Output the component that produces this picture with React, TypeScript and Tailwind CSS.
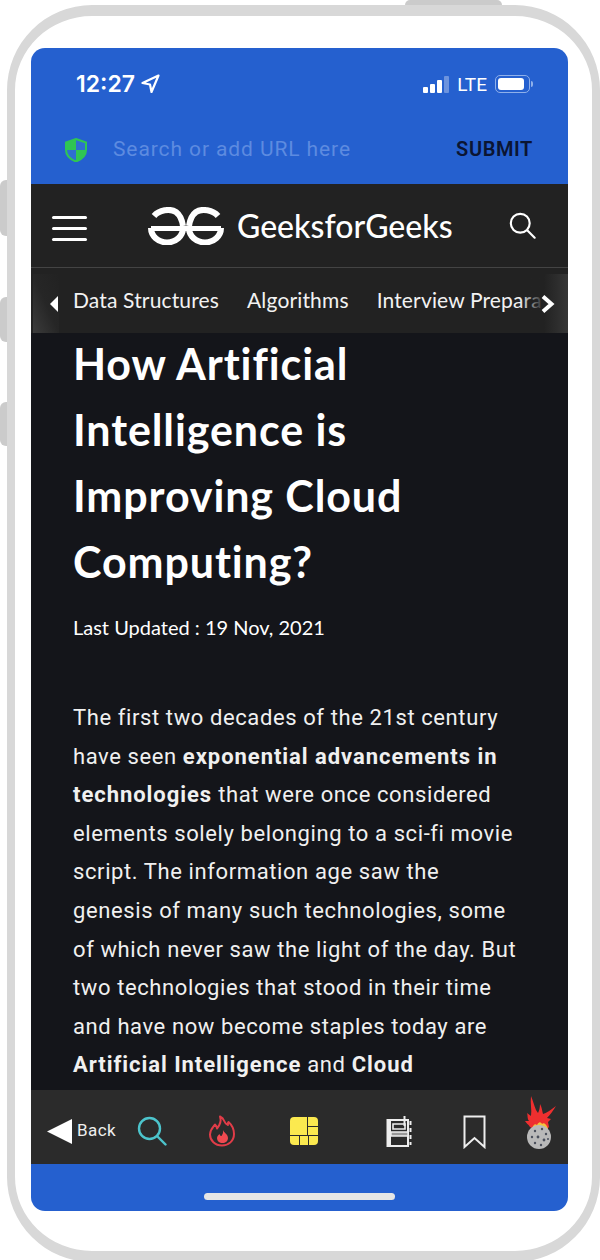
const bodyLines = [
  <>The first two decades of the 21st century</>,
  <>have seen <b className="tracking-[0.95px]">exponential advancements in</b></>,
  <><b className="tracking-[0.95px]">technologies</b> that were once considered</>,
  <>elements solely belonging to a sci-fi movie</>,
  <>script. The information age saw the</>,
  <>genesis of many such technologies, some</>,
  <>of which never saw the light of the day. But</>,
  <>two technologies that stood in their time</>,
  <>and have now become staples today are</>,
  <><b className="tracking-[0.95px]">Artificial Intelligence</b> and <b className="tracking-[0.95px]">Cloud</b></>,
  <><b className="tracking-[0.95px]">Computing.</b> Both have changed the way</>,
];

const ShieldIcon = () => (
  <svg width="22" height="24" viewBox="0 0 22 24">
    <path d="M11 1 L21 4.5 V12 C21 18 16 21.5 11 23.5 C6 21.5 1 18 1 12 V4.5 Z" fill="#2f6fd0" stroke="#2fc653" strokeWidth="2" />
    <path d="M11 1 V12 H1 V4.5 Z M11 12 H21 C21 18 16 21.5 11 23.5 Z" fill="#2fc653" />
  </svg>
);

const LocationIcon = () => (
  <svg width="19" height="20" viewBox="0 0 19 20" fill="none" stroke="white" strokeWidth="2.2" strokeLinejoin="round">
    <path d="M17.5 1.5 L1.5 9 L9 10.5 L10.5 18 Z" />
  </svg>
);

const SignalIcon = () => (
  <div className="flex items-end gap-[2px] h-[17px]">
    <div className="w-[5px] h-[6px] rounded-[1px] bg-white" />
    <div className="w-[5px] h-[9px] rounded-[1px] bg-white" />
    <div className="w-[5px] h-[13px] rounded-[1px] bg-white" />
    <div className="w-[5px] h-[17px] rounded-[1px] bg-[#6c93de]" />
  </div>
);

const BatteryIcon = () => (
  <div className="flex items-center">
    <div className="w-[35px] h-[18px] rounded-[5px] border border-[#8fb0ea] p-[2px]">
      <div className="w-[26px] h-full rounded-[3px] bg-white" />
    </div>
    <div className="ml-[1px] w-[2px] h-[6px] rounded-r-sm bg-[#8fb0ea]" />
  </div>
);

const GfgLogo = () => (
  <svg width="76" height="38" viewBox="0 0 76 38" fill="none" stroke="white" strokeWidth="6">
    <path d="M6 9 C11 3 22 1 28 5 C32 8 34 12 35 19" />
    <path d="M70 9 C65 3 54 1 48 5 C44 8 42 12 41 19" />
    <path d="M3 21.5 H73" strokeWidth="5" />
    <path d="M3 21 A15.5 14 0 0 0 35 21" />
    <path d="M41 21 A15.5 14 0 0 0 73 21" />
  </svg>
);

const SearchGlass = ({ size, color, width }: { size: number; color: string; width: number }) => (
  <svg width={size} height={size} viewBox="0 0 30 30" fill="none" stroke={color} strokeWidth={width} strokeLinecap="round">
    <circle cx="12.5" cy="12.5" r="10.5" />
    <path d="M20.5 20.5 L28.5 28.5" />
  </svg>
);

const FlameIcon = () => (
  <svg width="26" height="32" viewBox="0 0 26 32" fill="none">
    <path d="M11 1.5 C17 4 13.5 8 19 10 C18.5 8.5 19 7.5 19.5 7 C23.5 10.5 25 14.5 25 19 C25 26 19.5 30.5 13 30.5 C6 30.5 1 25.5 1 19.5 C1 14.5 4 12.5 6 9.5 C7.5 11 8 12 8 13.5 C11 10 12.5 6 11 1.5 Z" stroke="#e03c48" strokeWidth="2" strokeLinejoin="round" />
    <path d="M14 15 C15 18 19 19 19 23 C19 26 16.5 28 13.5 28 C10.5 28 8 26 8 23 C8 21 9.5 20 10.5 19 C11 20.5 11.5 21 12.5 21 C13.5 19.5 14.5 17.5 14 15 Z" fill="#f04a50" />
  </svg>
);

const ChipIcon = () => (
  <div className="grid grid-cols-[17px_10px] grid-rows-[18px_9px] w-[28px] h-[28px] gap-[1px]">
    <div className="bg-[#fbe94f] rounded-tl-[4px]" />
    <div className="grid grid-rows-2 gap-[1px]">
      <div className="bg-[#fbe94f] rounded-tr-[4px]" />
      <div className="bg-[#fbe94f]" />
    </div>
    <div className="col-span-2 grid grid-cols-3 gap-[1px]">
      <div className="bg-[#fbe94f] rounded-bl-[4px]" />
      <div className="bg-[#fbe94f]" />
      <div className="bg-[#fbe94f] rounded-br-[4px]" />
    </div>
  </div>
);

const NotebookIcon = () => (
  <svg width="26" height="33" viewBox="0 0 26 33" fill="none" stroke="#eeeeee" strokeWidth="2">
    <path d="M1.5 5 H22 V31 H1.5 Z" />
    <path d="M1.5 5 H5 V31 H1.5 Z" fill="#eeeeee" stroke="none" />
    <path d="M7 9 H19 V14 H7 Z" strokeWidth="1.6" />
    <path d="M5 17 H22 V21 H5 Z" fill="#999999" stroke="#eeeeee" strokeWidth="1.4" />
    <path d="M18.5 1 V11" strokeWidth="2" />
    <path d="M24.5 6 V10 M24.5 13 V17 M24.5 20 V24 M24.5 27 V30" strokeWidth="2" />
  </svg>
);

const BookmarkIcon = () => (
  <svg width="23" height="34" viewBox="0 0 23 34" fill="none" stroke="#eeeeee" strokeWidth="2">
    <path d="M1.5 1.5 H21.5 V32 L11.5 23 L1.5 32 Z" />
  </svg>
);

const BombIcon = () => (
  <svg width="32" height="53" viewBox="0 0 32 53">
    <path d="M5 31 C3 28 1 27 0 25 L4 25 C2 22 3 20 2 17 L6 20 C7 14 5 7 6 0 C8 5 9 9 11 14 L13 17 C14 15 15 12 15 8 C17 11 17 15 18 18 C21 17 26 14 31 10 C28 15 25 19 22 22 L26 23 L23 26 L24 31 L22 33 H8 Z" fill="#ee2f2f" />
    <path d="M7 33 C8 29 10 27 12 29 C14 25 16 26 17 28 C19 26 22 29 23 33 Z" fill="#f2c23c" />
    <circle cx="14" cy="41" r="12" fill="#b9b9b9" />
    <g fill="#4a4f5c">
      <circle cx="10" cy="35" r="1.2" />
      <circle cx="17" cy="33" r="1.2" />
      <circle cx="21" cy="38" r="1.2" />
      <circle cx="7" cy="41" r="1.2" />
      <circle cx="13" cy="41" r="1.4" />
      <circle cx="19" cy="44" r="1.4" />
      <circle cx="10" cy="47" r="1.2" />
      <circle cx="16" cy="49" r="1.2" />
      <circle cx="23" cy="43" r="1" />
    </g>
  </svg>
);

const App = () => {
  return (
    <div className="relative w-[600px] h-[1260px] bg-white overflow-hidden">
      {/* device side buttons */}
      <div className="absolute left-0 top-[180px] w-[7px] h-[56px] rounded-l-md bg-[#cbcbcb]" />
      <div className="absolute left-0 top-[297px] w-[7px] h-[45px] rounded-l-md bg-[#cbcbcb]" />
      <div className="absolute left-0 top-[402px] w-[7px] h-[44px] rounded-l-md bg-[#cbcbcb]" />
      <div className="absolute left-[405px] top-0 w-[97px] h-[5px] rounded-t-md bg-[#cbcbcb]" />

      <div className="ml-[7px] mt-[5px] w-[593px] h-[1257px] rounded-[85px] border-x-8 border-y-[11px] border-[#d8d8d8] pl-[16px] pr-[24px] pt-[32px]">
        <div className="h-[1163px] rounded-[14px] overflow-hidden flex flex-col bg-[#2560cf] font-['Roboto',sans-serif]">
          {/* status bar */}
          <div className="h-[72px] shrink-0 pl-[45px] pr-[35px] flex items-center justify-between">
            <div className="flex items-center gap-[6px] text-white text-[23px] font-semibold font-['Inter',sans-serif]">
              <span>12:27</span>
              <LocationIcon />
            </div>
            <div className="flex items-center gap-[8px]">
              <SignalIcon />
              <span className="text-white text-[19px] leading-none">LTE</span>
              <BatteryIcon />
            </div>
          </div>

          {/* url bar */}
          <div className="h-[64px] shrink-0 pl-[34px] pr-[35px] pb-[4px] flex items-center">
            <ShieldIcon />
            <span className="ml-[26px] text-[#5d8be0] text-[21px] tracking-[0.9px]">Search or add URL here</span>
            <span className="ml-auto -mt-[2px] text-[#0b1533] text-[20px] font-semibold tracking-[0.6px]">SUBMIT</span>
          </div>

          {/* site header */}
          <div className="h-[84px] shrink-0 bg-[#222222] border-b border-[#444444] pl-[21px] pr-[32px] flex items-center font-['Lato',sans-serif]">
            <div className="mt-[6px] w-[35px] flex flex-col gap-[8px]">
              <div className="h-[3px] bg-white rounded-full" />
              <div className="h-[3px] bg-white rounded-full" />
              <div className="h-[3px] bg-white rounded-full" />
            </div>
            <div className="ml-[61px]">
              <GfgLogo />
            </div>
            <span className="ml-[13px] text-white text-[32px] font-medium leading-none">GeeksforGeeks</span>
            <div className="ml-auto">
              <SearchGlass size={27} color="white" width={2.4} />
            </div>
          </div>

          {/* topic nav */}
          <div className="relative h-[65px] shrink-0 bg-[#222222] pl-[42px] pr-[40px] pb-[2px] flex items-center gap-[28px] whitespace-nowrap overflow-hidden text-[#f2f2f2] text-[21px] tracking-[0.15px] font-['Lato',sans-serif]">
            <span>Data Structures</span>
            <span>Algorithms</span>
            <span>Interview Preparation</span>
            <div className="absolute left-[2px] top-[6px] bottom-0 w-[26px] bg-gradient-to-tr from-[#3c3c3c] via-[#262626] to-[#222222]" />
            <div className="absolute right-0 top-[6px] bottom-0 w-[48px] bg-gradient-to-r from-[#22222200] via-[#222222] to-[#363636]" />
            <svg className="absolute left-[19px] top-[28px]" width="9" height="16" viewBox="0 0 9 16" fill="white">
              <path d="M8 0 V16 L0 8 Z" />
            </svg>
            <svg className="absolute right-[13px] top-[27px]" width="14" height="18" viewBox="0 0 14 18" fill="none" stroke="white" strokeWidth="4">
              <path d="M2 1.5 L10.5 9 L2 16.5" />
            </svg>
          </div>

          {/* article */}
          <div className="flex-1 min-h-0 overflow-hidden bg-[#14151a] pl-[42px] text-white">
            <h1 className="-mt-[2px] text-[43px] leading-[66px] font-bold tracking-[0.9px] font-['Lato',sans-serif]">
              How Artificial<br />
              Intelligence is<br />
              Improving Cloud<br />
              Computing?
            </h1>
            <p className="mt-[17px] text-[20px] leading-[30px] font-['Lato',sans-serif]">Last Updated : 19 Nov, 2021</p>
            <div className="mt-[57px] text-[22px] leading-[38.6px] tracking-[0.6px] text-[#f0f0f0] whitespace-nowrap">
              {bodyLines.map((line, i) => (
                <div key={i}>{line}</div>
              ))}
            </div>
          </div>

          {/* bottom toolbar */}
          <div className="h-[74px] shrink-0 bg-[#2b2b2b] pl-[16px] pt-[8px] flex items-center">
            <svg width="25" height="25" viewBox="0 0 25 25" fill="white">
              <path d="M25 0 V25 L0 12.5 Z" />
            </svg>
            <span className="ml-[5px] text-[#eeeeee] text-[17px] tracking-[0.4px]">Back</span>
            <div className="ml-[21px]">
              <SearchGlass size={30} color="#4cc4cc" width={2.4} />
            </div>
            <div className="ml-[42px]">
              <FlameIcon />
            </div>
            <div className="ml-[55px]">
              <ChipIcon />
            </div>
            <div className="ml-[68px]">
              <NotebookIcon />
            </div>
            <div className="ml-[51px] mt-[1px]">
              <BookmarkIcon />
            </div>
            <div className="ml-[39px] -mt-[17px]">
              <BombIcon />
            </div>
          </div>

          {/* home indicator */}
          <div className="h-[47px] shrink-0 flex justify-center pt-[29px]">
            <div className="w-[191px] h-[7px] rounded-full bg-[#e6e6e6]" />
          </div>
        </div>
      </div>
    </div>
  );
};

export default App;
